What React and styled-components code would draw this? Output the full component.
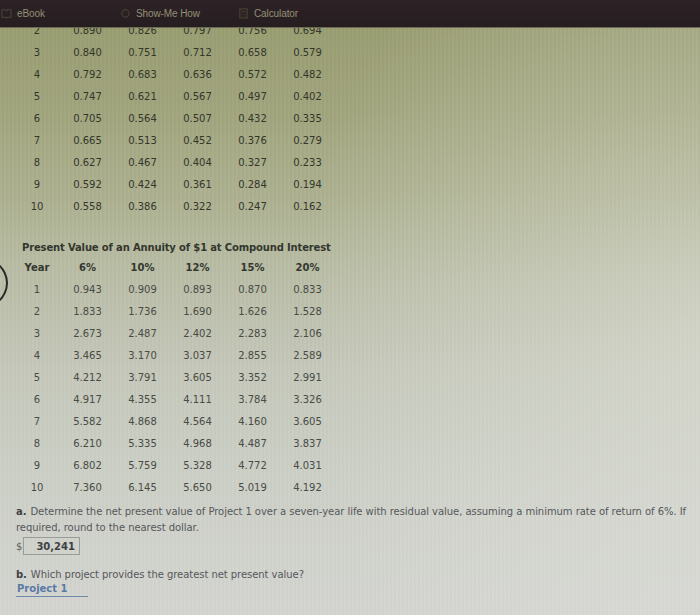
import React from "react";
import styled, { createGlobalStyle } from "styled-components";

const GlobalStyle = createGlobalStyle`
  html, body {
    margin: 0;
    padding: 0;
    width: 700px;
    height: 615px;
    overflow: hidden;
  }
  body {
    font-family: "DejaVu Sans", Verdana, sans-serif;
  }
`;

const presentValue = [
  [2, "0.890", "0.826", "0.797", "0.756", "0.694"],
  [3, "0.840", "0.751", "0.712", "0.658", "0.579"],
  [4, "0.792", "0.683", "0.636", "0.572", "0.482"],
  [5, "0.747", "0.621", "0.567", "0.497", "0.402"],
  [6, "0.705", "0.564", "0.507", "0.432", "0.335"],
  [7, "0.665", "0.513", "0.452", "0.376", "0.279"],
  [8, "0.627", "0.467", "0.404", "0.327", "0.233"],
  [9, "0.592", "0.424", "0.361", "0.284", "0.194"],
  [10, "0.558", "0.386", "0.322", "0.247", "0.162"],
];

const annuity = [
  [1, "0.943", "0.909", "0.893", "0.870", "0.833"],
  [2, "1.833", "1.736", "1.690", "1.626", "1.528"],
  [3, "2.673", "2.487", "2.402", "2.283", "2.106"],
  [4, "3.465", "3.170", "3.037", "2.855", "2.589"],
  [5, "4.212", "3.791", "3.605", "3.352", "2.991"],
  [6, "4.917", "4.355", "4.111", "3.784", "3.326"],
  [7, "5.582", "4.868", "4.564", "4.160", "3.605"],
  [8, "6.210", "5.335", "4.968", "4.487", "3.837"],
  [9, "6.802", "5.759", "5.328", "4.772", "4.031"],
  [10, "7.360", "6.145", "5.650", "5.019", "4.192"],
];

const Page = styled.div`
  position: relative;
  width: 700px;
  height: 615px;
  overflow: hidden;
  background:
    repeating-linear-gradient(
      90deg,
      rgba(255, 255, 255, 0.025) 0 2px,
      rgba(0, 0, 0, 0.015) 2px 4px
    ),
    radial-gradient(
      ellipse 420px 520px at 720px 330px,
      rgba(235, 236, 230, 0.4),
      rgba(235, 236, 230, 0) 100%
    ),
    linear-gradient(
      180deg,
      #979b6e 0%,
      #a1a57d 18%,
      #adb190 32%,
      #babea7 45%,
      #c5c8ba 60%,
      #cdd0c7 78%,
      #d4d5d1 100%
    );
`;

const TopBar = styled.div`
  position: absolute;
  top: 0;
  left: 0;
  right: 0;
  height: 27px;
  z-index: 2;
  display: flex;
  align-items: center;
  background: linear-gradient(180deg, #2d2327 0%, #261d21 100%);
  border-bottom: 1px solid #6e6b55;
  font-family: "Liberation Sans", Arial, sans-serif;
  font-size: 10px;
  letter-spacing: -0.1px;
  color: #948f74;
`;

const BarItem = styled.div`
  display: flex;
  align-items: center;
  gap: 5px;
  width: ${(p) => p.$w}px;
`;

const Content = styled.div`
  padding: 19px 0 0 0;
  color: #33362b;
  font-size: 10px;
`;

const Table = styled.div`
  display: flex;
  flex-direction: column;
`;

const Row = styled.div`
  display: grid;
  grid-template-columns: 46px repeat(5, 55px);
  padding-left: 14px;
  height: 22px;
  align-items: center;
  color: ${(p) => p.$color || "inherit"};
  font-weight: ${(p) => (p.$bold ? 700 : 400)};
`;

const Cell = styled.div`
  text-align: center;
`;

const Title = styled.div`
  margin: 25px 0 0 22px;
  height: 14px;
  font-weight: 700;
  font-size: 10px;
  letter-spacing: -0.15px;
  color: #33362e;
`;

const Lower = styled.div`
  color: #484b46;
  font-size: 10px;
`;

const Question = styled.p`
  margin: ${(p) => p.$top || 6}px 0 0 16px;
  width: 680px;
  line-height: 16px;
  letter-spacing: -0.05px;
  color: #55585b;
`;

const Label = styled.span`
  font-weight: 700;
  color: #3f4247;
  margin-right: 4px;
`;

const AnswerRow = styled.div`
  display: flex;
  align-items: center;
  margin: 1px 0 0 16px;
  color: #606460;
`;

const Input = styled.div`
  margin-left: 1px;
  width: 57px;
  height: 18px;
  box-sizing: border-box;
  border: 1px solid #9a9c98;
  display: flex;
  align-items: center;
  padding-left: 12px;
  color: #3d4043;
  font-weight: 700;
  font-size: 10px;
`;

const Select = styled.div`
  margin: 0 0 0 16px;
  width: 71px;
  border-bottom: 1.5px solid #6f8aa8;
  padding: 0 0 2px 1px;
  color: #5a7aa6;
  font-weight: 700;
`;

const Arc = styled.div`
  position: absolute;
  left: -52px;
  top: 256px;
  width: 56px;
  height: 50px;
  border-radius: 50%;
  border: 2px solid #2a2a28;
`;

const Icon = ({ kind }) => (
  <svg width="11" height="11" viewBox="0 0 12 12" fill="none" stroke="#4a4536" strokeWidth="1.1">
    {kind === "book" && <path d="M1 2h4l1 1 1-1h4v8H7l-1 1-1-1H1z" />}
    {kind === "bulb" && <circle cx="6" cy="6" r="4" />}
    {kind === "calc" && (
      <>
        <rect x="2" y="1" width="8" height="10" />
        <path d="M4 4h4M4 7h1M7 7h1M4 9h1M7 9h1" />
      </>
    )}
  </svg>
);

const DataTable = ({ rows }) => (
  <Table>
    {rows.map((r) => (
      <Row key={r[0]}>
        {r.map((v, i) => (
          <Cell key={i}>{v}</Cell>
        ))}
      </Row>
    ))}
  </Table>
);

const App = () => {
  return (
    <Page>
      <GlobalStyle />
      <TopBar>
        <BarItem $w={119} style={{ marginLeft: 1 }}>
          <Icon kind="book" />
          <span>eBook</span>
        </BarItem>
        <BarItem $w={118}>
          <Icon kind="bulb" />
          <span>Show-Me How</span>
        </BarItem>
        <BarItem $w={120}>
          <Icon kind="calc" />
          <span>Calculator</span>
        </BarItem>
      </TopBar>
      <Arc />
      <Content>
        <DataTable rows={presentValue} />
        <Title>Present Value of an Annuity of $1 at Compound Interest</Title>
        <Lower>
          <Row $bold $color="#34372f">
            <Cell>Year</Cell>
            <Cell>6%</Cell>
            <Cell>10%</Cell>
            <Cell>12%</Cell>
            <Cell>15%</Cell>
            <Cell>20%</Cell>
          </Row>
          <DataTable rows={annuity} />
          <Question>
            <Label>a.</Label>Determine the net present value of Project 1 over
            a seven-year life with residual value, assuming a minimum rate of
            return of 6%. If required, round to the nearest dollar.
          </Question>
          <AnswerRow>
            <span>$</span>
            <Input>30,241</Input>
          </AnswerRow>
          <Question $top={12}>
            <Label>b.</Label>Which project provides the greatest net present
            value?
          </Question>
          <Select>Project 1</Select>
        </Lower>
      </Content>
    </Page>
  );
};

export default App;
